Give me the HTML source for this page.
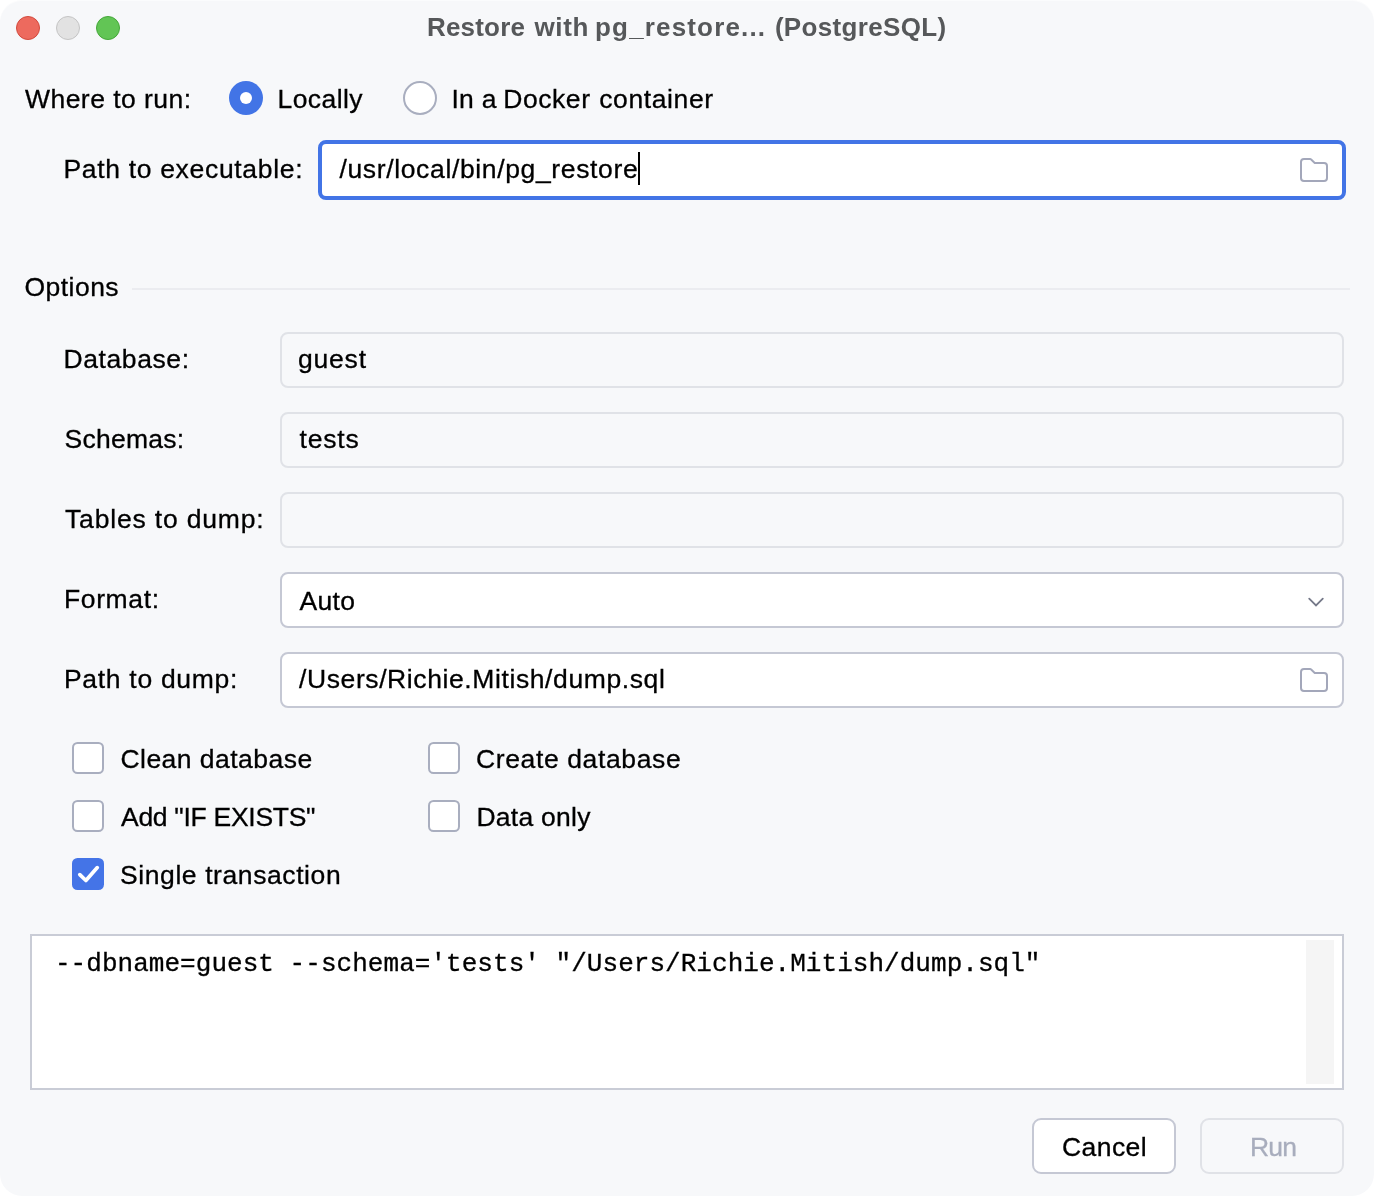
<!DOCTYPE html><html><head><meta charset="utf-8"><title>Restore with pg_restore</title><style>

html,body{margin:0;padding:0;background:#fff;}
body{width:1374px;height:1196px;position:relative;overflow:hidden;}
#win{will-change:transform;position:absolute;left:0;top:0;width:1374px;height:1196px;background:#f7f8fa;border-radius:22px;overflow:hidden;box-shadow:inset 0 1px 0 rgba(255,255,255,0.55);}
.t{position:absolute;white-space:pre;line-height:1;margin:0;padding:0;-webkit-text-stroke:0.3px currentColor;}
.ttl{-webkit-text-stroke:0;}
.grp{position:absolute;left:0;top:0;}
.abs{position:absolute;box-sizing:border-box;}
.tl{width:24px;height:24px;border-radius:50%;top:16px;}
.dis{border:2px solid #e0e2e7;border-radius:8px;background:#f7f8fa;left:280px;width:1064px;height:56px;}
.en{border:2px solid #c5c8d4;border-radius:8px;background:#fff;left:280px;width:1064px;height:56px;}
.cb{width:32px;height:32px;border:2px solid #a9aebf;border-radius:5.5px;background:#fff;}

</style></head><body><div id="win">
<div class="abs tl" style="left:16px;background:#ed6a5e;border:1px solid #d24a3d;"></div>
<div class="abs tl" style="left:56px;background:#e2e2e2;border:1px solid #c4c4c4;"></div>
<div class="abs tl" style="left:96px;background:#62c555;border:1px solid #45a739;"></div>
<div class="abs" style="left:229px;top:81px;width:34px;height:34px;border-radius:50%;background:#4274e6;"></div>
<div class="abs" style="left:240px;top:92px;width:12px;height:12px;border-radius:50%;background:#fff;"></div>
<div class="abs" style="left:403px;top:81px;width:34px;height:34px;border-radius:50%;background:#fff;border:2px solid #a9aebf;"></div>
<div class="abs" style="left:318px;top:140px;width:1028px;height:60px;border:4px solid #4274e6;border-radius:8px;background:#fff;"></div>
<div class="abs" style="left:638px;top:152px;width:2px;height:33px;background:#000;"></div>
<svg class="abs" style="left:1298px;top:154px" width="32" height="32" viewBox="0 0 32 32"><path d="M3 8a3 3 0 0 1 3-3h6.2a1 1 0 0 1 .7.3l3.6 3.4a1 1 0 0 0 .7.3H26a3 3 0 0 1 3 3v12a3 3 0 0 1-3 3H6a3 3 0 0 1-3-3z" fill="none" stroke="#a3a7ba" stroke-width="2" stroke-linejoin="round"/></svg>
<div class="abs" style="left:132px;top:288px;width:1218px;height:2px;background:#ebecf0;"></div>
<div class="abs dis" style="top:332px"></div>
<div class="abs dis" style="top:412px"></div>
<div class="abs dis" style="top:492px"></div>
<div class="abs en" style="top:572px"></div>
<div class="abs en" style="top:652px"></div>
<svg class="abs" style="left:1300px;top:584px" width="32" height="32" viewBox="0 0 32 32"><path d="M9.2 14.6l6.8 6.8 6.8-6.8" fill="none" stroke="#757989" stroke-width="1.8" stroke-linecap="round" stroke-linejoin="miter"/></svg>
<svg class="abs" style="left:1298px;top:664px" width="32" height="32" viewBox="0 0 32 32"><path d="M3 8a3 3 0 0 1 3-3h6.2a1 1 0 0 1 .7.3l3.6 3.4a1 1 0 0 0 .7.3H26a3 3 0 0 1 3 3v12a3 3 0 0 1-3 3H6a3 3 0 0 1-3-3z" fill="none" stroke="#a3a7ba" stroke-width="2" stroke-linejoin="round"/></svg>
<div class="abs cb" style="left:72px;top:742px"></div>
<div class="abs cb" style="left:428px;top:742px"></div>
<div class="abs cb" style="left:72px;top:800px"></div>
<div class="abs cb" style="left:428px;top:800px"></div>
<div class="abs" style="left:72px;top:858px;width:32px;height:32px;border-radius:5.5px;background:#4474e7;"></div>
<svg class="abs" style="left:72px;top:858px" width="32" height="32" viewBox="0 0 32 32"><path d="M7.8 16.6L13.9 22.5L25.3 9.6" fill="none" stroke="#fff" stroke-width="3.7" stroke-linecap="round" stroke-linejoin="round"/></svg>
<div class="abs" style="left:30px;top:934px;width:1314px;height:156px;border:2px solid #c9ccd6;background:#fff;"></div>
<div class="abs" style="left:1306px;top:940px;width:28px;height:144px;background:#f5f5f5;"></div>
<div class="abs" style="left:1032px;top:1118px;width:144px;height:56px;border:2px solid #c5c8d4;border-radius:9px;background:#fff;"></div>
<div class="abs" style="left:1200px;top:1118px;width:144px;height:56px;border:2px solid #e0e2e7;border-radius:9px;background:#f7f8fa;"></div>
<div class="grp" id="title">
<span class="t ttl" id="title_0" style="left:427.00px;top:14.47px;font:700 26px/1 'Liberation Sans', sans-serif;letter-spacing:0.191px;color:#56585a">Restore</span>
 <span class="t ttl" id="title_1" style="left:534.39px;top:14.47px;font:700 26px/1 'Liberation Sans', sans-serif;letter-spacing:0.658px;color:#56585a">with</span>
 <span class="t ttl" id="title_2" style="left:595.08px;top:14.47px;font:700 26px/1 'Liberation Sans', sans-serif;letter-spacing:1.158px;color:#56585a">pg_restore...</span>
 <span class="t ttl" id="title_3" style="left:774.89px;top:14.47px;font:700 26px/1 'Liberation Sans', sans-serif;letter-spacing:0.330px;color:#56585a">(PostgreSQL)</span>
</div>
<div class="t" id="where" style="left:24.98px;top:85.55px;font:400 26.5px/1 'Liberation Sans', sans-serif;letter-spacing:0.466px;color:#000">Where to run:</div>
<div class="t" id="locally" style="left:277.50px;top:85.55px;font:400 26.5px/1 'Liberation Sans', sans-serif;letter-spacing:0.433px;color:#000">Locally</div>
<div class="grp" id="docker">
<span class="t" id="docker_0" style="left:451.50px;top:85.55px;font:400 26.5px/1 'Liberation Sans', sans-serif;letter-spacing:0.090px;color:#000">In</span>
 <span class="t" id="docker_1" style="left:481.79px;top:85.55px;font:400 26.5px/1 'Liberation Sans', sans-serif;letter-spacing:0.000px;color:#000">a</span>
 <span class="t" id="docker_2" style="left:503.18px;top:85.55px;font:400 26.5px/1 'Liberation Sans', sans-serif;letter-spacing:0.570px;color:#000">Docker</span>
 <span class="t" id="docker_3" style="left:599.18px;top:85.55px;font:400 26.5px/1 'Liberation Sans', sans-serif;letter-spacing:0.615px;color:#000">container</span>
</div>
<div class="t" id="pathexe" style="left:63.46px;top:155.55px;font:400 26.5px/1 'Liberation Sans', sans-serif;letter-spacing:0.677px;color:#000">Path to executable:</div>
<div class="t" id="usr" style="left:339.46px;top:155.55px;font:400 26.5px/1 'Liberation Sans', sans-serif;letter-spacing:0.642px;color:#000">/usr/local/bin/pg_restore</div>
<div class="t" id="options" style="left:24.48px;top:273.55px;font:400 26.5px/1 'Liberation Sans', sans-serif;letter-spacing:0.467px;color:#000">Options</div>
<div class="t" id="database" style="left:63.46px;top:345.55px;font:400 26.5px/1 'Liberation Sans', sans-serif;letter-spacing:0.602px;color:#000">Database:</div>
<div class="t" id="guest" style="left:298.00px;top:345.55px;font:400 26.5px/1 'Liberation Sans', sans-serif;letter-spacing:0.800px;color:#000">guest</div>
<div class="t" id="schemas" style="left:64.46px;top:425.55px;font:400 26.5px/1 'Liberation Sans', sans-serif;letter-spacing:0.257px;color:#000">Schemas:</div>
<div class="t" id="tests" style="left:299.48px;top:425.55px;font:400 26.5px/1 'Liberation Sans', sans-serif;letter-spacing:0.850px;color:#000">tests</div>
<div class="t" id="tables" style="left:65.00px;top:505.55px;font:400 26.5px/1 'Liberation Sans', sans-serif;letter-spacing:0.829px;color:#000">Tables to dump:</div>
<div class="t" id="format" style="left:63.96px;top:585.55px;font:400 26.5px/1 'Liberation Sans', sans-serif;letter-spacing:0.633px;color:#000">Format:</div>
<div class="t" id="auto" style="left:299.48px;top:587.55px;font:400 26.5px/1 'Liberation Sans', sans-serif;letter-spacing:0.334px;color:#000">Auto</div>
<div class="t" id="pathdump" style="left:63.96px;top:665.55px;font:400 26.5px/1 'Liberation Sans', sans-serif;letter-spacing:0.700px;color:#000">Path to dump:</div>
<div class="t" id="users" style="left:299.00px;top:665.55px;font:400 26.5px/1 'Liberation Sans', sans-serif;letter-spacing:0.599px;color:#000">/Users/Richie.Mitish/dump.sql</div>
<div class="t" id="clean" style="left:120.47px;top:745.55px;font:400 26.5px/1 'Liberation Sans', sans-serif;letter-spacing:0.462px;color:#000">Clean database</div>
<div class="t" id="create" style="left:475.95px;top:745.55px;font:400 26.5px/1 'Liberation Sans', sans-serif;letter-spacing:0.629px;color:#000">Create database</div>
<div class="t" id="addif" style="left:121.00px;top:803.55px;font:400 26.5px/1 'Liberation Sans', sans-serif;letter-spacing:-0.285px;color:#000">Add &quot;IF EXISTS&quot;</div>
<div class="t" id="dataonly" style="left:476.45px;top:803.55px;font:400 26.5px/1 'Liberation Sans', sans-serif;letter-spacing:0.252px;color:#000">Data only</div>
<div class="t" id="single" style="left:120.00px;top:861.55px;font:400 26.5px/1 'Liberation Sans', sans-serif;letter-spacing:0.588px;color:#000">Single transaction</div>
<div class="t" id="cmd" style="left:54.98px;top:951.47px;font:400 26px/1 'Liberation Mono', monospace;letter-spacing:0.041px;color:#000">--dbname=guest --schema='tests' &quot;/Users/Richie.Mitish/dump.sql&quot;</div>
<div class="t" id="cancel" style="left:1061.97px;top:1133.55px;font:400 26.5px/1 'Liberation Sans', sans-serif;letter-spacing:0.440px;color:#000">Cancel</div>
<div class="t" id="run" style="left:1249.97px;top:1133.55px;font:400 26.5px/1 'Liberation Sans', sans-serif;letter-spacing:-0.800px;color:#a8adbd">Run</div>
</div></body></html>
